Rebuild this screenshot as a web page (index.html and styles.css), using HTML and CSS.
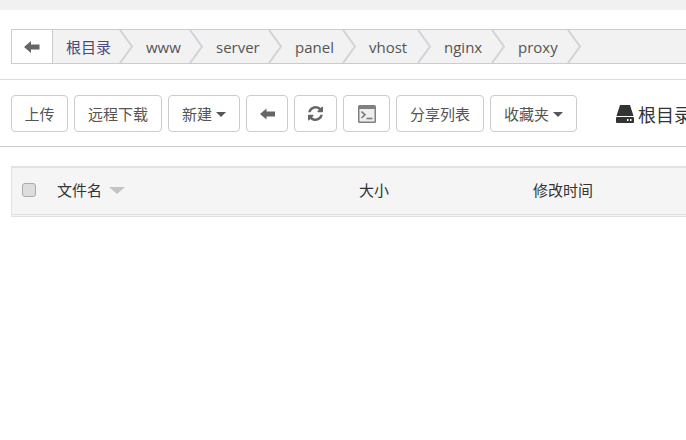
FILE: index.html
```html
<!DOCTYPE html>
<html lang="zh">
<head>
<meta charset="utf-8">
<title>文件管理</title>
<link rel="stylesheet" href="styles.css">
</head>
<body>
<div class="topband"></div>
<div class="pathbar">
  <div class="path-back">
    <svg class="ico-arrow" width="16" height="14" viewBox="0 0 16 14"><path d="M0 7 L7 1 V4.5 H15.500 V9.500 H7 V13 Z"/></svg>
  </div>
  <div class="crumb c80"><span class="crumb-text link">根目录</span><svg class="chev" width="14" height="33" viewBox="0 0 14 33"><path d="M1 0 L13 16.500 L1 33"/></svg></div>
  <div class="crumb c70"><span class="crumb-text">www</span><svg class="chev" width="14" height="33" viewBox="0 0 14 33"><path d="M1 0 L13 16.500 L1 33"/></svg></div>
  <div class="crumb c79"><span class="crumb-text">server</span><svg class="chev" width="14" height="33" viewBox="0 0 14 33"><path d="M1 0 L13 16.500 L1 33"/></svg></div>
  <div class="crumb c74"><span class="crumb-text">panel</span><svg class="chev" width="14" height="33" viewBox="0 0 14 33"><path d="M1 0 L13 16.500 L1 33"/></svg></div>
  <div class="crumb c75"><span class="crumb-text">vhost</span><svg class="chev" width="14" height="33" viewBox="0 0 14 33"><path d="M1 0 L13 16.500 L1 33"/></svg></div>
  <div class="crumb c74"><span class="crumb-text">nginx</span><svg class="chev" width="14" height="33" viewBox="0 0 14 33"><path d="M1 0 L13 16.500 L1 33"/></svg></div>
  <div class="crumb c76"><span class="crumb-text">proxy</span><svg class="chev" width="14" height="33" viewBox="0 0 14 33"><path d="M1 0 L13 16.500 L1 33"/></svg></div>
</div>
<div class="toolbar">
  <button class="btn w57">上传</button>
  <button class="btn w88">远程下载</button>
  <button class="btn w72">新建<span class="caret"></span></button>
  <button class="btn w42"><svg class="ico-arrow" width="15" height="12" viewBox="0 0 15 12"><path d="M0 6 L6.500 .5 V3.500 H15 V8.500 H6.500 V11.500 Z"/></svg></button>
  <button class="btn w43"><svg class="ico-refresh" width="15" height="15" viewBox="0 0 1536 1536"><path d="M1511 928q0 5-1 7-64 268-268 434.500t-478 166.500q-146 0-282.500-55t-243.500-157l-129 129q-19 19-45 19t-45-19-19-45v-448q0-26 19-45t45-19h448q26 0 45 19t19 45-19 45l-137 137q71 66 161 102t187 36q134 0 250-65t186-179q11-17 53-117 8-23 30-23h192q13 0 22.500 9.500t9.500 22.500zM1536 128v448q0 26-19 45t-45 19h-448q-26 0-45-19t-19-45 19-45l138-138q-148-137-349-137-134 0-250 65t-186 179q-11 17-53 117-8 23-30 23h-199q-13 0-22.500-9.500t-9.500-22.500v-7q65-268 270-434.500t480-166.500q146 0 284 55.500t245 156.500l130-129q19-19 45-19t45 19 19 45z"/></svg></button>
  <button class="btn w47"><svg width="18" height="18" viewBox="0 0 18 18"><rect width="18" height="18" rx="1.500" fill="#808080"/><rect x="1.500" y="4" width="15" height="12.500" fill="#eee"/><path d="M3.500 6.500 L7 9.800 L3.500 13" fill="none" stroke="#777" stroke-width="1.600"/><path d="M8.500 13.500 H14.500" stroke="#777" stroke-width="1.600"/></svg></button>
  <button class="btn w88">分享列表</button>
  <button class="btn w87">收藏夹<span class="caret"></span></button>
  <div class="disk">
    <svg width="18" height="18" viewBox="0 0 18 18"><path d="M4 0 H14 L17.500 11 H.5 Z" fill="#333"/><rect y="12" width="18" height="6" rx="1" fill="#333"/><rect x="11" y="14" width="1.500" height="2" fill="#fff"/><rect x="14" y="14" width="1.500" height="2" fill="#fff"/></svg>
    <span class="disk-name">根目录</span>
  </div>
</div>
<div class="table-head">
  <div class="col-check"><span class="checkbox"></span></div>
  <div class="col-name">文件名<span class="sort"></span></div>
  <div class="col-size">大小</div>
  <div class="col-time">修改时间</div>
</div>
</body>
</html>
```
FILE: styles.css
```css
* { box-sizing: border-box; }
html, body {
  margin: 0;
  height: 100%;
  overflow: hidden;
  background: #fff;
}
body {
  width: 686px;
  font-family: "Open Sans", "Noto Sans CJK SC", sans-serif;
  color: #555;
}
.topband { height: 10px; background: #f1f1f1; }
.pathbar {
  display: flex;
  width: 700px;
  height: 35px;
  margin: 19px 0 0 11px;
  background: #f2f2f2;
  border: 1px solid #ccc;
}
.path-back {
  width: 41px;
  flex: none;
  display: flex;
  align-items: center;
  justify-content: center;
  background: #fff;
  border-right: 1px solid #ccc;
}
.ico-arrow { fill: #666; display: block; }
.crumb {
  display: flex;
  align-items: center;
  justify-content: space-between;
  flex: none;
  padding-left: 13px;
}
.c80 { width: 80px; }
.c70 { width: 70px; }
.c79 { width: 79px; }
.c74 { width: 74px; }
.c75 { width: 75px; }
.c76 { width: 76px; }
.crumb-text { font-size: 15px; color: #555; white-space: nowrap; }
.crumb-text.link { color: #4a4a80; }
.chev { display: block; flex: none; }
.chev path { fill: none; stroke: #d2d2da; stroke-width: 2; }
.toolbar {
  display: flex;
  align-items: flex-start;
  gap: 6px;
  margin-top: 15px;
  padding: 15px 0 14px 11px;
  height: 68px;
  width: 686px;
  border-top: 1px solid #ddd;
  border-bottom: 1px solid #ccc;
  white-space: nowrap;
}
.btn {
  height: 37px;
  flex: none;
  padding: 0;
  display: flex;
  align-items: center;
  justify-content: center;
  background: #fff;
  border: 1px solid #ccc;
  border-radius: 4px;
  font: 15px "Open Sans", "Noto Sans CJK SC", sans-serif;
  color: #555;
}
.w57 { width: 57px; }
.w88 { width: 88px; }
.w72 { width: 72px; }
.w42 { width: 42px; }
.w43 { width: 43px; }
.w47 { width: 47px; }
.w87 { width: 87px; }
.ico-refresh { fill: #666; display: block; }
.caret {
  margin-left: 4px;
  margin-top: 2px;
  border-top: 5px solid #555;
  border-left: 5px solid transparent;
  border-right: 5px solid transparent;
}
.disk {
  display: flex;
  align-items: center;
  gap: 4px;
  height: 37px;
  margin-left: 33px;
  flex: none;
}
.disk-name { font-size: 18px; color: #333; }
.table-head {
  display: flex;
  align-items: center;
  width: 700px;
  height: 51px;
  margin: 19px 0 0 11px;
  padding-bottom: 3px;
  background: #f5f5f5;
  border: 1px solid #e2e2e2;
  border-top-width: 2px;
  border-bottom: 3px double #e0e0e0;
  font-size: 15px;
  color: #333;
}
.col-check { width: 45px; padding-left: 10px; flex: none; display: flex; }
.checkbox {
  width: 14px;
  height: 14px;
  background: #ddd;
  border: 1px solid #aaa;
  border-radius: 3px;
}
.col-name { width: 302px; flex: none; display: flex; align-items: center; }
.sort {
  margin-left: 7px;
  margin-top: 2px;
  border-top: 7px solid #c4c4c4;
  border-left: 8px solid transparent;
  border-right: 8px solid transparent;
}
.col-size { width: 174px; flex: none; }
.col-time { flex: none; }
```
